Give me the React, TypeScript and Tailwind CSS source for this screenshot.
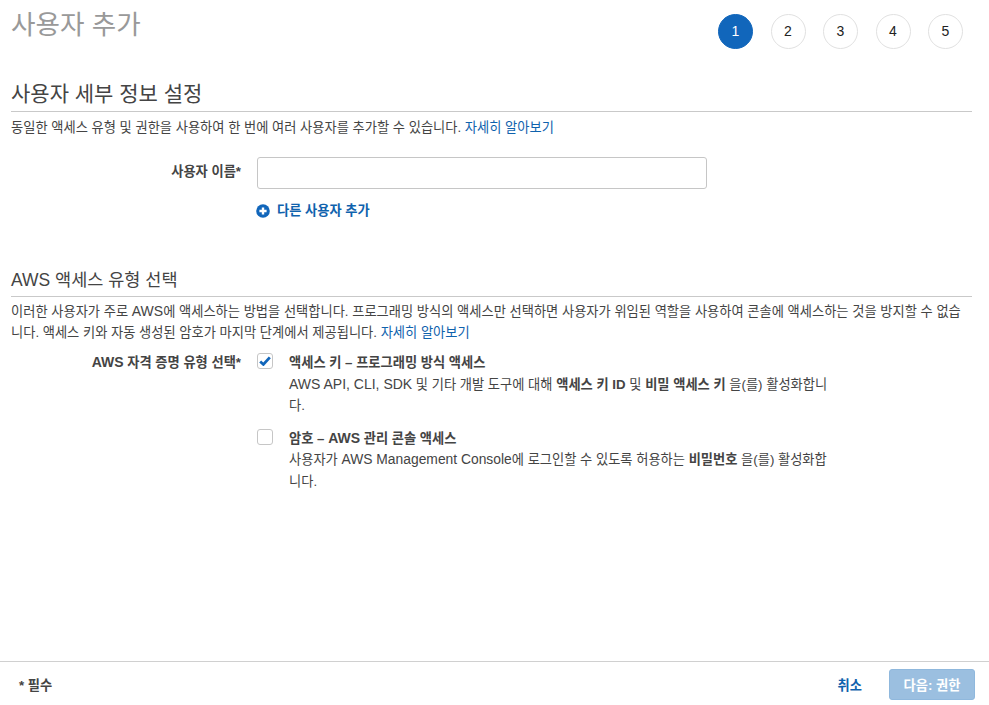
function Plus() {
  return (
    <svg width="14" height="14" viewBox="0 0 14 14" className="shrink-0">
      <circle cx="7" cy="7" r="6.8" fill="#1166bb" />
      <path d="M7 3.4v7.2M3.4 7h7.2" stroke="#fff" strokeWidth="2.4" />
    </svg>
  );
}

function Box({ checked }: { checked?: boolean }) {
  return (
    <span className="mt-[1px] flex h-4 w-4 shrink-0 items-center justify-center rounded-[3px] border border-[#c6c6c6] bg-white">
      {checked && (
        <svg width="12" height="10" viewBox="0 0 12 10">
          <path d="M1.2 5.4 4.4 8.4 10.8 1.4" fill="none" stroke="#1166bb" strokeWidth="2.8" />
        </svg>
      )}
    </span>
  );
}

export default function App() {
  const ko = "font-['Liberation_Sans','Noto_Sans_CJK_KR',sans-serif]";
  return (
    <div className={`flex h-[705px] w-[989px] flex-col overflow-hidden bg-white text-[13.25px] leading-[19px] text-[#444] ${ko}`}>
      <main className="flex-1 px-[11px]">
        <div className="flex h-[70px] justify-between">
          <h1 className="text-[26.6px] leading-[50px] text-[#999]">사용자 추가</h1>
          <ol className="mt-[14px] mr-[15px] flex h-[35px] gap-[17.5px]">
            {[1, 2, 3, 4, 5].map((n) => (
              <li
                key={n}
                className={`flex h-[35px] w-[35px] items-center justify-center rounded-full border text-[14px] ${
                  n === 1 ? "border-[#1166bb] bg-[#1166bb] text-white" : "border-[#e1e1e1] bg-white text-[#222]"
                }`}
              >
                {n}
              </li>
            ))}
          </ol>
        </div>

        <h2 className="w-[961px] border-b border-[#c9c9c9] pb-[3px] pt-[9px] text-[21px] leading-[29px] text-[#444]">
          사용자 세부 정보 설정
        </h2>
        <p className="mt-[6px]">
          동일한 액세스 유형 및 권한을 사용하여 한 번에 여러 사용자를 추가할 수 있습니다.{" "}
          <a className="text-[#0f62ad]">자세히 알아보기</a>
        </p>

        <div className="mt-[20px] flex">
          <label className="w-[230px] pt-[5px] text-right font-bold">사용자 이름*</label>
          <input className="ml-[16px] h-[32px] w-[450px] rounded-[3px] border border-[#c6c6c6] bg-white" />
        </div>
        <a className="ml-[245px] mt-[12px] flex items-center gap-[7px] font-bold text-[#0f62ad]">
          <Plus />
          다른 사용자 추가
        </a>

        <h2 className="mt-[47px] w-[961px] border-b border-[#c9c9c9] pb-[2px] text-[17.5px] leading-[27px] text-[#444]">
          AWS 액세스 유형 선택
        </h2>
        <p className="mt-[4px] w-[961px] leading-[21px]">
          이러한 사용자가 주로 <span className="text-[14px]">AWS</span>에 액세스하는 방법을 선택합니다. 프로그래밍 방식의 액세스만 선택하면 사용자가 위임된 역할을 사용하여 콘솔에 액세스하는 것을 방지할 수 없습니다. 액세스 키와 자동 생성된 암호가 마지막 단계에서 제공됩니다.{" "}
          <a className="text-[#0f62ad]">자세히 알아보기</a>
        </p>

        <div className="mt-[9px] flex">
          <div className="w-[230px] pt-[1px] text-right font-bold">
            <span className="text-[14px]">AWS</span> 자격 증명 유형 선택*
          </div>
          <div className="ml-[16px] flex flex-col gap-[11px]">
            <div className="flex gap-[16px]">
              <Box checked />
              <div className="w-[540px] leading-[21.5px]">
                <div className="font-bold">액세스 키 – 프로그래밍 방식 액세스</div>
                <span className="text-[14px]">AWS API, CLI, SDK</span> 및 기타 개발 도구에 대해 <b>액세스 키 ID</b> 및 <b>비밀 액세스 키</b> 을(를) 활성화합니다.
              </div>
            </div>
            <div className="flex gap-[16px]">
              <Box />
              <div className="w-[540px] leading-[21.5px]">
                <div className="font-bold">암호 – <span className="text-[14px]">AWS</span> 관리 콘솔 액세스</div>
                사용자가 <span className="text-[13.85px]">AWS Management Console</span>에 로그인할 수 있도록 허용하는 <b>비밀번호</b> 을(를) 활성화합니다.
              </div>
            </div>
          </div>
        </div>
      </main>

      <footer className="flex h-[44px] items-center justify-between border-t border-[#d0d0d0] pl-[19px] pr-[14px] pt-[2px]">
        <span className="pt-[1px] font-bold">* 필수</span>
        <div className="flex items-center gap-[27px]">
          <a className="pt-[1px] font-bold text-[#0f62ad]">취소</a>
          <button className="h-[31px] w-[86px] rounded-[3px] border border-[#8fb8dd] bg-[#9bbfe0] pt-[1px] font-bold text-white">
            다음: 권한
          </button>
        </div>
      </footer>
    </div>
  );
}
